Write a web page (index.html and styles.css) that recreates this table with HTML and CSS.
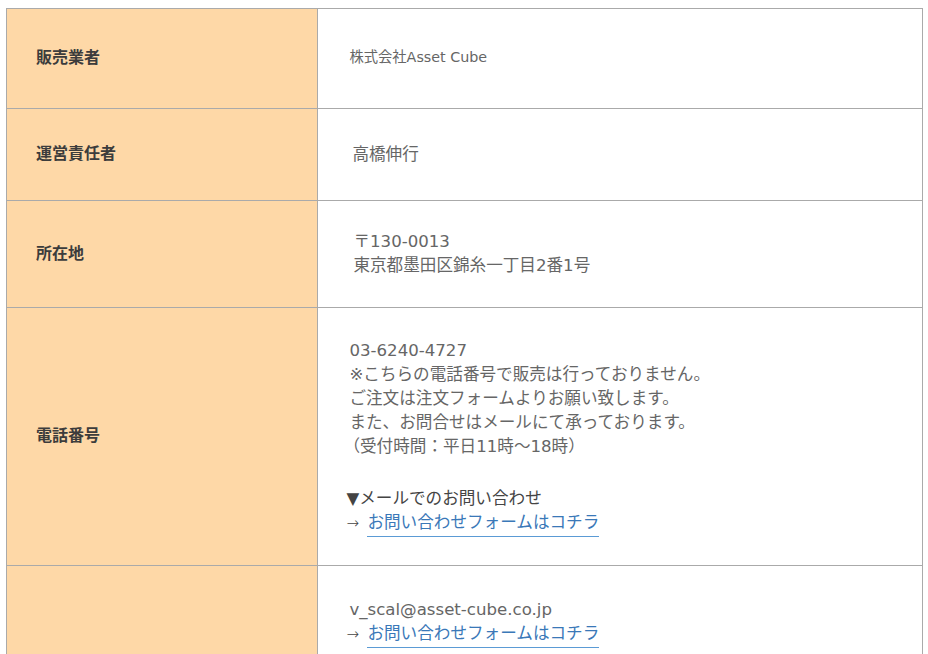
FILE: index.html
```html
<!DOCTYPE html>
<html lang="ja">

<head>
  <meta charset="utf-8">
  <title>特定商取引法に基づく表記</title>
  <link rel="stylesheet" href="styles.css">
</head>

<body>
  <table class="law">
    <tr class="row-seller">
      <th>販売業者</th>
      <td class="small">株式会社Asset Cube</td>
    </tr>
    <tr class="row-manager">
      <th>運営責任者</th>
      <td><span class="shift">高橋伸行</span></td>
    </tr>
    <tr class="row-address">
      <th>所在地</th>
      <td class="indent">〒130-0013<br>東京都墨田区錦糸一丁目2番1号</td>
    </tr>
    <tr class="row-tel">
      <th>電話番号</th>
      <td>
        <p>03-6240-4727<br>
          ※こちらの電話番号で販売は行っておりません。<br>
          ご注文は注文フォームよりお願い致します。<br>
          また、お問合せはメールにて承っております。<br>
          <span class="paren">（受付時間：平日11時～18時）</span>
        </p>
        <p class="mail-head">▼メールでのお問い合わせ<br>
          <span class="arrow">→</span><a href="#">お問い合わせフォームはコチラ</a>
        </p>
      </td>
    </tr>
    <tr class="row-mail">
      <th></th>
      <td>
        <p>v_scal@asset-cube.co.jp<br>
          <span class="dark"><span class="arrow">→</span><a href="#">お問い合わせフォームはコチラ</a></span>
        </p>
      </td>
    </tr>
  </table>
</body>

</html>
```

FILE: styles.css
```css
body {
  margin: 8px 5px 0 6px;
  font-family: "DejaVu Sans", "Noto Sans CJK JP", sans-serif;
  background: #fff;
}

.law {
  width: 100%;
  border-collapse: collapse;
}

.law th,
.law td {
  border: 1px solid #aaa;
  vertical-align: middle;
}

.law th {
  width: 34%;
  padding: 0 29px 5px;
  background: #fed8a7;
  color: #3c3c3c;
  font-size: 16px;
  font-weight: bold;
  text-align: left;
}

.law td {
  padding: 0 31px;
  color: #666;
  font-size: 16.6px;
  line-height: 24px;
}

.law td.small {
  font-size: 14.3px;
  padding-bottom: 4px;
}

.law td.indent {
  padding-left: 35px;
}

.shift {
  padding-left: 3px;
}

.paren {
  margin-left: -6px;
}

.law p {
  margin: 0;
}

.law p.mail-head {
  margin-top: 28px;
  color: #444;
  margin-left: -3px;
}

.dark {
  color: #444;
  margin-left: -3px;
}

.arrow {
  display: inline-block;
  width: 21px;
  font-size: 15px;
  font-weight: 300;
}

.law a {
  color: #3a78b8;
  text-decoration: none;
  border-bottom: 1px solid #5b9bd5;
  padding-bottom: 4px;
}

.row-seller td {
  height: 95px;
}

.row-manager td {
  height: 91px;
}

.row-address td {
  height: 106px;
}

.row-tel td {
  height: 257px;
}

.row-mail td {
  height: 140px;
  vertical-align: top;
  padding-top: 32px;
}
```
